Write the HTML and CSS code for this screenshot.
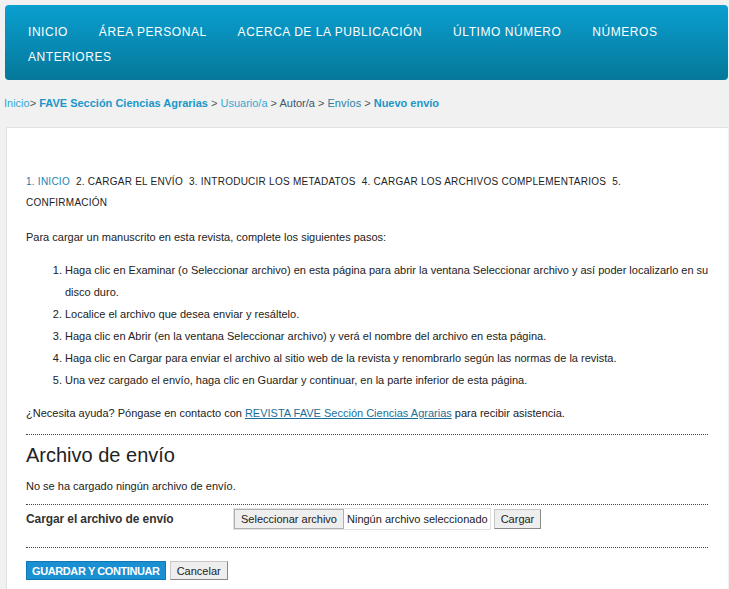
FILE: index.html
```html
<!DOCTYPE html>
<html lang="es">
<head>
    <meta charset="UTF-8">
    <title>Nuevo envío</title>
    <link rel="stylesheet" href="styles.css">
</head>
<body>

<header class="navbar">
    <ul class="menu">
        <li><a href="#">Inicio</a></li>
        <li><a href="#">Área personal</a></li>
        <li><a href="#">Acerca de la publicación</a></li>
        <li><a href="#">Último número</a></li>
        <li><a href="#">Números anteriores</a></li>
    </ul>
</header>

<div class="breadcrumb">
    <a href="#" class="crumb-light">Inicio</a>&gt; <a href="#" class="crumb-strong">FAVE Sección Ciencias Agrarias</a> &gt; <a href="#" class="crumb-light">Usuario/a</a> &gt; <a href="#" class="crumb-dark">Autor/a</a> &gt; <a href="#" class="crumb-mid">Envíos</a> &gt; <a href="#" class="crumb-strong">Nuevo envío</a>
</div>

<div class="main-panel">
    <div class="steps">
        <span class="step current">1. Inicio</span>
        <span class="step">2. Cargar el envío</span>
        <span class="step">3. Introducir los metadatos</span>
        <span class="step">4. Cargar los archivos complementarios</span>
        <span class="step">5. Confirmación</span>
    </div>

    <p class="intro">Para cargar un manuscrito en esta revista, complete los siguientes pasos:</p>

    <ol class="instructions">
        <li>Haga clic en Examinar (o Seleccionar archivo) en esta página para abrir la ventana Seleccionar archivo y así poder localizarlo en su disco duro.</li>
        <li>Localice el archivo que desea enviar y resáltelo.</li>
        <li>Haga clic en Abrir (en la ventana Seleccionar archivo) y verá el nombre del archivo en esta página.</li>
        <li>Haga clic en Cargar para enviar el archivo al sitio web de la revista y renombrarlo según las normas de la revista.</li>
        <li>Una vez cargado el envío, haga clic en Guardar y continuar, en la parte inferior de esta página.</li>
    </ol>

    <p class="help">¿Necesita ayuda? Póngase en contacto con <a href="#">REVISTA FAVE Sección Ciencias Agrarias</a> para recibir asistencia.</p>

    <div class="separator"></div>

    <h3 class="section-title">Archivo de envío</h3>
    <p class="no-file">No se ha cargado ningún archivo de envío.</p>

    <div class="separator tight"></div>

    <div class="upload-row">
        <span class="upload-label">Cargar el archivo de envío</span>
        <span class="file-picker">
            <button class="btn-file">Seleccionar archivo</button><span class="file-name">Ningún archivo seleccionado</span>
        </span>
        <button class="btn-plain">Cargar</button>
    </div>

    <div class="separator wide"></div>

    <div class="actions">
        <button class="btn-primary">Guardar y continuar</button>
        <button class="btn-plain">Cancelar</button>
    </div>
</div>

</body>
</html>
```

FILE: styles.css
```css
/* Estructura general */
body {
    font-family: "Liberation Sans", Arial, sans-serif;
    margin: 0;
    padding: 5px 1px 0 4px;
    background-color: #f1f1f1;
    color: #222;
}
a {
    text-decoration: none;
}

/* Menu superior */
.navbar {
    margin-left: 1px;
    background: linear-gradient(to bottom, #0a9fd0, #05789a);
    border-radius: 4px;
    padding: 15px 0 10px 23px;
}
.menu {
    list-style: none;
    margin: 0;
    padding: 0;
    font-size: 12px;
    line-height: 25px;
    letter-spacing: 0.55px;
    text-transform: uppercase;
}
.menu li {
    display: inline;
    margin-right: 27px;
}
.menu a {
    color: #ffffff;
}

/* Migas de pan */
.breadcrumb {
    margin: 16px 0 17px;
    font-size: 11px;
    line-height: 14px;
    color: #555;
}
.crumb-light {
    color: #35a8d4;
}
.crumb-strong {
    color: #1a97c8;
    font-weight: bold;
}
.crumb-dark {
    color: #3d5568;
}
.crumb-mid {
    color: #2a7fa6;
}

/* Panel principal */
.main-panel {
    margin-left: 2px;
    background: #ffffff;
    border: 1px solid #e2e2e2;
    border-right: none;
    padding: 43px 20px 10px 19px;
    min-height: 420px;
}
.steps {
    font-size: 10px;
    line-height: 21px;
    letter-spacing: 0.25px;
    text-transform: uppercase;
    color: #222;
    padding-right: 50px;
}
.step {
    margin-right: 3px;
}
.step.current {
    color: #1a7fb0;
}
.intro {
    font-size: 11px;
    margin: 17px 0 0;
    line-height: 14px;
}
.instructions {
    font-size: 11px;
    line-height: 22px;
    margin: 15px -8px 0 0;
    padding-left: 39px;
}
.help {
    font-size: 11px;
    line-height: 14px;
    margin: 15px 0 0;
}
.help a {
    color: #1a6f9a;
    text-decoration: underline;
}
.separator {
    border-top: 1px dotted #444;
    margin-top: 14px;
}
.separator.tight {
    margin-top: 11px;
}
.separator.wide {
    margin-top: 17px;
}
.section-title {
    font-size: 20px;
    font-weight: normal;
    margin: 9px 0 0;
    line-height: 22px;
}
.no-file {
    font-size: 11px;
    line-height: 14px;
    margin: 13px 0 0;
}

/* Formulario de carga */
.upload-row {
    display: flex;
    align-items: center;
    margin-top: 3px;
    font-size: 11px;
}
.upload-label {
    width: 207px;
    font-size: 12px;
    font-weight: bold;
    color: #333;
    letter-spacing: -0.1px;
}
.file-picker {
    display: inline-flex;
    border: 1px solid #e2e2e2;
    background: #ffffff;
}
.file-name {
    padding: 0 2px 0 3px;
    line-height: 20px;
}
.btn-file,
.btn-plain {
    font-family: "Liberation Sans", Arial, sans-serif;
    font-size: 11px;
    color: #222;
    background: #eeeeee;
    border: 1px solid #aaa;
    border-color: #c8c8c8 #888 #888 #c8c8c8;
    padding: 2px 6px;
    height: 20px;
    cursor: pointer;
}
.btn-file {
    border-color: #b0b0b0;
}
.upload-row .btn-plain {
    margin-left: 3px;
}
.actions {
    display: flex;
    gap: 4px;
    margin-top: 13px;
}
.btn-primary {
    font-family: "Liberation Sans", Arial, sans-serif;
    font-size: 11px;
    font-weight: bold;
    letter-spacing: -0.4px;
    text-transform: uppercase;
    color: #ffffff;
    background: #1a8fd2;
    border: 1px solid #1079b5;
    padding: 2px 5px;
    height: 19px;
    cursor: pointer;
}
.actions .btn-plain {
    height: 19px;
}
```
